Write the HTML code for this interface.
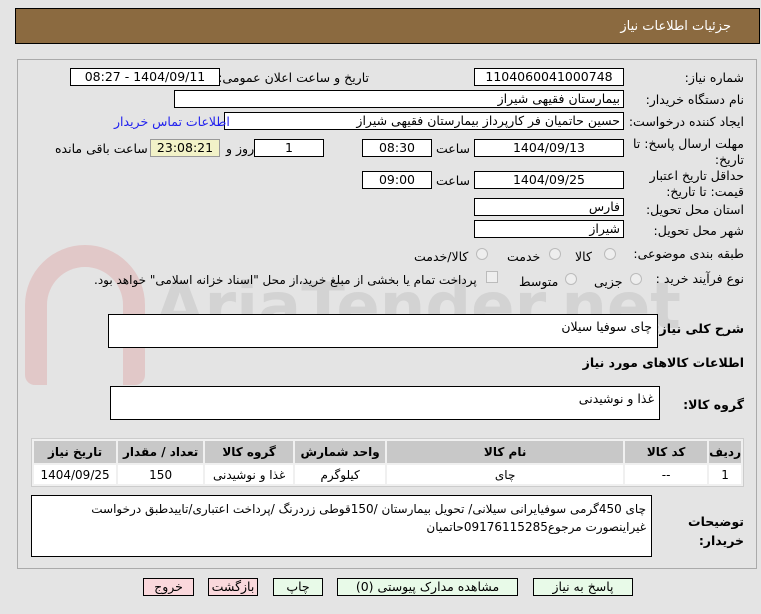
<!DOCTYPE html>
<html><head><meta charset="utf-8"><style>
*{box-sizing:border-box;margin:0;padding:0}
body{width:761px;height:614px;background:#e4e4e4;font-family:"DejaVu Sans","Liberation Sans",sans-serif;font-size:12px;color:#000;position:relative;overflow:hidden;direction:rtl}
.a{position:absolute;white-space:nowrap}
.hd{position:absolute;left:15px;top:8px;width:745px;height:36px;background:#8b6a40;border:1px solid #000;color:#fff;font-size:13px;text-align:right;padding:10px 28px 0 0}
.pn{position:absolute;left:17px;top:59px;width:740px;height:510px;border:1px solid #aaa;background:#e4e4e4}
.b{position:absolute;background:#fff;border:1px solid #000;height:18px;font-size:12.5px;line-height:16px;text-align:center}
.r{text-align:right;padding-right:3px}
.l{position:absolute;text-align:right;white-space:nowrap;font-size:12.5px}
.rad{position:absolute;width:12px;height:12px;border-radius:50%;border:1px solid #bbb;background:#eee}
.ta{position:absolute;background:#fff;border:1px solid #000;text-align:right;padding:4px 5px;font-size:12.5px}
table{position:absolute;left:31px;top:438px;width:713px;border-collapse:separate;border-spacing:2px;background:#f0f0f0;border:1px solid #ccc}
td,th{text-align:center;font-size:12px;height:22px}
th{background:#c8c8c8;font-weight:bold}
td{background:#fff;height:19px}
.btn{position:absolute;top:578px;height:18px;border:1px solid #000;font-size:12.5px;line-height:16px;text-align:center}
</style></head><body>
<div class="hd">جزئیات اطلاعات نیاز</div>
<div class="pn"></div>
<div style="position:absolute;left:25px;top:245px;width:120px;height:140px;border:22px solid rgba(220,150,150,.35);border-radius:60px 60px 10px 10px;border-bottom:none"></div>
<div class="a" style="left:155px;top:270px;font-size:64px;font-weight:bold;color:rgba(150,150,150,.22);direction:ltr">AriaTender.net</div>

<div class="l" style="right:17px;top:70px">شماره نیاز:</div>
<div class="b" style="left:474px;top:68px;width:150px">1104060041000748</div>
<div class="l" style="right:392px;top:70px">تاریخ و ساعت اعلان عمومی:</div>
<div class="b" style="left:70px;top:68px;width:150px">1404/09/11 - 08:27</div>

<div class="l" style="right:17px;top:92px">نام دستگاه خریدار:</div>
<div class="b r" style="left:174px;top:90px;width:450px">بیمارستان فقیهی شیراز</div>

<div class="l" style="right:17px;top:114px">ایجاد کننده درخواست:</div>
<div class="b r" style="left:224px;top:112px;width:400px">حسین حاتمیان فر کارپرداز بیمارستان فقیهی شیراز</div>
<div class="l" style="left:114px;top:114px;color:#2020ee">اطلاعات تماس خریدار</div>

<div class="l" style="right:17px;top:136px;line-height:16px">مهلت ارسال پاسخ: تا<br>تاریخ:</div>
<div class="b" style="left:474px;top:139px;width:150px">1404/09/13</div>
<div class="l" style="left:436px;top:141px">ساعت</div>
<div class="b" style="left:362px;top:139px;width:70px">08:30</div>
<div class="b" style="left:254px;top:139px;width:70px">1</div>
<div class="l" style="left:226px;top:141px">روز و</div>
<div class="b" style="left:150px;top:139px;width:70px;background:#f2f2c8;border-color:#999">23:08:21</div>
<div class="l" style="left:55px;top:141px">ساعت باقی مانده</div>

<div class="l" style="right:17px;top:168px;line-height:16px">حداقل تاریخ اعتبار<br>قیمت: تا تاریخ:</div>
<div class="b" style="left:474px;top:171px;width:150px">1404/09/25</div>
<div class="l" style="left:436px;top:173px">ساعت</div>
<div class="b" style="left:362px;top:171px;width:70px">09:00</div>

<div class="l" style="right:17px;top:202px">استان محل تحویل:</div>
<div class="b r" style="left:474px;top:198px;width:150px">فارس</div>
<div class="l" style="right:17px;top:223px">شهر محل تحویل:</div>
<div class="b r" style="left:474px;top:220px;width:150px">شیراز</div>

<div class="l" style="right:17px;top:246px">طبقه بندی موضوعی:</div>
<div class="rad" style="left:604px;top:248px"></div><div class="l" style="left:575px;top:249px">کالا</div>
<div class="rad" style="left:549px;top:248px"></div><div class="l" style="left:507px;top:249px">خدمت</div>
<div class="rad" style="left:476px;top:248px"></div><div class="l" style="left:414px;top:249px">کالا/خدمت</div>

<div class="l" style="right:17px;top:271px">نوع فرآیند خرید :</div>
<div class="rad" style="left:630px;top:273px"></div><div class="l" style="left:594px;top:274px">جزیی</div>
<div class="rad" style="left:565px;top:273px"></div><div class="l" style="left:519px;top:274px">متوسط</div>
<div style="position:absolute;left:486px;top:271px;width:12px;height:12px;border:1px solid #bbb;background:#eee"></div>
<div class="l" style="left:94px;top:273px;font-size:12px">پرداخت تمام یا بخشی از مبلغ خرید،از محل "اسناد خزانه اسلامی" خواهد بود.</div>

<div class="l" style="right:17px;top:321px;font-weight:bold">شرح کلی نیاز:</div>
<div class="ta" style="left:108px;top:314px;width:550px;height:34px">چای سوفیا سیلان</div>
<div class="l" style="right:17px;top:355px;font-weight:bold">اطلاعات کالاهای مورد نیاز</div>
<div class="l" style="right:17px;top:397px;font-weight:bold">گروه کالا:</div>
<div class="ta" style="left:110px;top:386px;width:550px;height:34px">غذا و نوشیدنی</div>

<table><tr><th style="width:28px">ردیف</th><th style="width:82px">کد کالا</th><th style="width:236px">نام کالا</th><th style="width:90px">واحد شمارش</th><th style="width:88px">گروه کالا</th><th style="width:85px">تعداد / مقدار</th><th>تاریخ نیاز</th></tr>
<tr><td>1</td><td>--</td><td>چای</td><td>کیلوگرم</td><td>غذا و نوشیدنی</td><td>150</td><td>1404/09/25</td></tr></table>

<div class="l" style="right:17px;top:512px;font-weight:bold;line-height:19px">توضیحات<br>خریدار:</div>
<div class="ta" style="left:31px;top:495px;width:621px;height:62px;line-height:18px;white-space:normal;font-size:12px;letter-spacing:-0.2px">چای 450گرمی سوفیایرانی سیلانی/ تحویل بیمارستان /150قوطی زردرنگ /پرداخت اعتباری/تاییدطبق درخواست غیراینصورت مرجوع09176115285حاتمیان</div>

<div class="btn" style="left:533px;width:100px;background:#e8fae8">پاسخ به نیاز</div>
<div class="btn" style="left:337px;width:181px;background:#e8fae8">مشاهده مدارک پیوستی (0)</div>
<div class="btn" style="left:273px;width:50px;background:#e8fae8">چاپ</div>
<div class="btn" style="left:208px;width:50px;background:#fad8dc">بازگشت</div>
<div class="btn" style="left:143px;width:51px;background:#fad8dc">خروج</div>
</body></html>
